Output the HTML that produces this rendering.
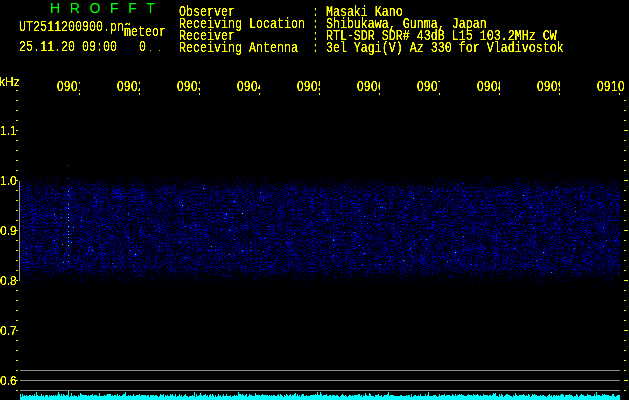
<!DOCTYPE html>
<html lang="en">
<head>
<meta charset="utf-8">
<title>HROFFT</title>
<style>
html,body{margin:0;padding:0;background:#000;}
body{width:629px;height:400px;overflow:hidden;position:relative;}
#w{position:absolute;left:0;top:0;width:629px;height:400px;background:#000;overflow:hidden;}
#tx{position:absolute;left:0;top:0;width:629px;height:400px;filter:url(#thr);}
.m{position:absolute;margin:0;font-family:"Liberation Mono",monospace;font-size:11.667px;line-height:14px;height:14px;color:#ff0;white-space:pre;transform-origin:0 0;transform:scaleY(1.3);}
.d{position:absolute;margin:0;font-family:"Liberation Sans",sans-serif;font-size:11.5px;letter-spacing:0.606px;font-kerning:none;font-variant-ligatures:none;line-height:14px;height:14px;color:#ff0;white-space:pre;transform-origin:0 0;transform:scaleY(1.22);}
.t{position:absolute;font-family:"Liberation Sans",sans-serif;font-size:14px;line-height:16px;color:#0f0;white-space:pre;}
.a{position:absolute;font-family:"Liberation Sans",sans-serif;font-size:12px;line-height:14px;color:#ff0;white-space:pre;}
.tl{position:absolute;top:78px;width:24px;height:18px;overflow:hidden;}
.tl .d{left:1px;top:0;}
.c{position:absolute;overflow:hidden;}
#gfx{position:absolute;left:0;top:0;}
</style>
</head>
<body>
<div id="w">
<svg width="0" height="0" style="position:absolute"><defs>
<filter id="thr" x="0" y="0" width="100%" height="100%" color-interpolation-filters="sRGB"><feComponentTransfer><feFuncA type="linear" slope="3" intercept="-0.6"/></feComponentTransfer></filter>
<filter id="thr2" x="0" y="0" width="100%" height="100%" color-interpolation-filters="sRGB"><feComponentTransfer><feFuncA type="linear" slope="1.25" intercept="-0.1"/></feComponentTransfer></filter>
</defs></svg>
<svg id="gfx" width="629" height="400" viewBox="0 0 629 400" shape-rendering="crispEdges">
<defs>
<linearGradient id="env" x1="0" y1="0" x2="0" y2="1">
<stop offset="0.0000" stop-color="rgb(148,148,148)"/>
<stop offset="0.0580" stop-color="rgb(173,173,173)"/>
<stop offset="0.1304" stop-color="rgb(214,214,214)"/>
<stop offset="0.2174" stop-color="rgb(255,255,255)"/>
<stop offset="0.7826" stop-color="rgb(255,255,255)"/>
<stop offset="0.8841" stop-color="rgb(214,214,214)"/>
<stop offset="0.9565" stop-color="rgb(173,173,173)"/>
<stop offset="1.0000" stop-color="rgb(148,148,148)"/>
</linearGradient>
<filter id="nz" x="0" y="0" width="100%" height="100%" color-interpolation-filters="sRGB">
<feTurbulence type="fractalNoise" baseFrequency="1.61514 1.755" numOctaves="1" seed="7"/>
<feColorMatrix type="matrix" values="1 0 0 0 0  1 0 0 0 0  1 0 0 0 0  0 0 0 0 1" result="n"/>
<feTurbulence type="fractalNoise" baseFrequency="0.13 0.09" numOctaves="2" seed="3"/>
<feColorMatrix type="matrix" values="1 0 0 0 0  1 0 0 0 0  1 0 0 0 0  0 0 0 0 1" result="m"/>
<feComposite in="n" in2="SourceGraphic" operator="arithmetic" k1="0" k2="1" k3="1" k4="-1" result="v"/>
<feTurbulence type="fractalNoise" baseFrequency="0.37 0.003" numOctaves="1" seed="11"/>
<feColorMatrix type="matrix" values="1 0 0 0 0  1 0 0 0 0  1 0 0 0 0  0 0 0 0 1" result="c"/>
<feComposite in="v" in2="m" operator="arithmetic" k1="0" k2="1" k3="0.18" k4="-0.09" result="v2"/>
<feComposite in="v2" in2="c" operator="arithmetic" k1="0" k2="1" k3="0.07" k4="-0.035"/>
<feComponentTransfer result="s"><feFuncR type="linear" slope="0" intercept="0"/><feFuncG type="table" tableValues="0 0 0 0 0 0 0 0 0 0 0 0 0 0 0 0 0 0 0 0 0 0 0 0 0 0 0 0 0 0 0 0 0 0 0 0 0 0 0.167 0.333 0.5 0.667 0.833 1 1 1 1 1 1 1 1"/><feFuncB type="table" tableValues="0 0 0 0 0 0 0 0 0 0 0 0 0 0 0 0 0 0 0 0 0 0 0 0.053 0.105 0.158 0.21 0.263 0.315 0.367 0.42 0.52 0.62 0.72 0.813 0.907 1.0 1.0 1.0 1.0 1.0 1.0 1.0 1.0 1.0 1.0 1.0 1.0 1.0 1.0 1.0"/></feComponentTransfer>
<feGaussianBlur in="s" stdDeviation="0.65" result="b"/>
<feColorMatrix in="s" type="matrix" values="0 0 0 0 0  0 0.6 0 0 0  0 0 0.58 0 0  0 0 0 0 1" result="s2"/>
<feColorMatrix in="b" type="matrix" values="0 0 0 0 0  0 0.4 0 0 0  0 0 0.42 0 0  0 0 0 0 1" result="b2"/>
<feComposite in="s2" in2="b2" operator="arithmetic" k1="0" k2="1" k3="1" k4="0"/>
</filter>
</defs>
<rect x="20" y="160" width="300" height="138" fill="url(#env)" filter="url(#nz)"/>
<g transform="translate(0,-500)"><rect x="320" y="660" width="300" height="138" fill="url(#env)" filter="url(#nz)"/></g>
<rect x="68" y="191" width="1" height="1" fill="#0df"/><rect x="68" y="195" width="1" height="1" fill="#0bf"/><rect x="68" y="204" width="1" height="1" fill="#0ef"/><rect x="68" y="208" width="1" height="1" fill="#0ef"/><rect x="68" y="214" width="1" height="1" fill="#0cf"/><rect x="68" y="217" width="1" height="1" fill="#0ff"/><rect x="68" y="220" width="1" height="1" fill="#0df"/><rect x="68" y="226" width="1" height="1" fill="#0ef"/><rect x="68" y="231" width="1" height="1" fill="#0cf"/><rect x="68" y="234" width="1" height="1" fill="#0df"/><rect x="68" y="237" width="1" height="1" fill="#0ef"/><rect x="68" y="241" width="1" height="1" fill="#0bf"/><rect x="68" y="245" width="1" height="1" fill="#0df"/><rect x="68" y="255" width="1" height="1" fill="#0af"/><rect x="68" y="261" width="1" height="1" fill="#0bf"/><rect x="68" y="165" width="1" height="1" fill="#04f"/><rect x="68" y="178" width="1" height="1" fill="#04f"/><rect x="54" y="214" width="1" height="1" fill="#0bf"/><rect x="61" y="217" width="1" height="1" fill="#0af"/><rect x="73" y="227" width="1" height="1" fill="#0af"/><rect x="54" y="240" width="1" height="1" fill="#0af"/><rect x="62" y="244" width="1" height="1" fill="#0cf"/><rect x="71" y="242" width="1" height="1" fill="#0af"/><rect x="92" y="250" width="1" height="1" fill="#0bf"/>
<path d="M19.5 181V281" stroke="#999" stroke-width="1" fill="none"/>
<path d="M20 370.5H620M20 380.5H620M20 390.5H620" stroke="#8a8a8a" stroke-width="1" fill="none"/>
<path d="M16 90h2v1h-2zM16 100h2v1h-2zM16 110h2v1h-2zM16 120h2v1h-2zM16 130h2v1h-2zM16 140h2v1h-2zM16 150h2v1h-2zM16 160h2v1h-2zM16 170h2v1h-2zM16 180h2v1h-2zM16 190h2v1h-2zM16 200h2v1h-2zM16 210h2v1h-2zM16 220h2v1h-2zM16 230h2v1h-2zM16 240h2v1h-2zM16 250h2v1h-2zM16 260h2v1h-2zM16 270h2v1h-2zM16 280h2v1h-2zM16 290h2v1h-2zM16 300h2v1h-2zM16 310h2v1h-2zM16 320h2v1h-2zM16 330h2v1h-2zM16 340h2v1h-2zM16 350h2v1h-2zM16 360h2v1h-2zM16 370h2v1h-2zM16 380h2v1h-2zM16 390h2v1h-2zM624 100h2v1h-2zM624 110h2v1h-2zM624 120h2v1h-2zM624 130h4v1h-4zM624 140h2v1h-2zM624 150h2v1h-2zM624 160h2v1h-2zM624 170h2v1h-2zM624 180h4v1h-4zM624 190h2v1h-2zM624 200h2v1h-2zM624 210h2v1h-2zM624 220h2v1h-2zM624 230h4v1h-4zM624 240h2v1h-2zM624 250h2v1h-2zM624 260h2v1h-2zM624 270h2v1h-2zM624 280h4v1h-4zM624 290h2v1h-2zM624 300h2v1h-2zM624 310h2v1h-2zM624 320h2v1h-2zM624 330h4v1h-4zM624 340h2v1h-2zM624 350h2v1h-2zM624 360h2v1h-2zM624 370h2v1h-2zM624 380h4v1h-4zM624 390h2v1h-2zM79 93h1v2h-1zM139 93h1v2h-1zM199 93h1v2h-1zM259 93h1v2h-1zM319 93h1v2h-1zM379 93h1v2h-1zM439 93h1v2h-1zM499 93h1v2h-1zM559 93h1v2h-1zM619 93h1v2h-1z" fill="#ff0"/>
<path d="M150 50h1v1h-1zM159 50h1v1h-1z" fill="#cc0"/>
<path d="M20 400V394h1V397h1V394h1V396h1V395h1V396h1V395h1V396h2V395h2V396h1V395h1V396h1V394h1V396h1V392h1V395h1V396h3V394h1V396h1V395h1V397h1V395h3V397h1V395h1V396h1V395h1V396h1V395h1V396h1V395h1V396h1V395h1V392h1V394h1V396h1V394h1V396h1V394h1V395h1V396h1V395h2V391h1V397h1V396h1V393h1V396h2V395h1V396h2V397h1V395h1V396h1V393h1V394h1V395h5V396h1V395h1V396h1V395h2V394h1V396h1V395h3V396h2V393h1V396h4V395h1V396h1V395h1V394h4V396h1V395h1V396h1V395h2V396h1V394h1V396h1V395h1V396h2V395h1V394h2V392h1V396h2V395h1V396h1V395h1V396h2V394h1V396h2V395h3V394h1V396h1V395h5V396h1V395h2V397h1V395h4V396h1V395h2V396h1V397h1V396h1V394h1V395h2V394h1V397h1V395h1V396h1V395h1V396h2V394h1V395h1V394h1V396h2V394h1V397h1V396h2V394h1V396h1V395h1V397h1V396h1V395h1V394h1V396h2V397h1V396h3V395h1V396h1V392h1V397h1V394h1V396h2V395h1V393h1V395h1V396h1V395h2V394h1V396h1V395h1V397h1V395h1V394h1V396h1V394h1V395h1V397h1V395h1V397h1V396h1V394h1V396h1V395h1V397h1V396h1V394h1V396h2V394h1V396h3V395h1V397h1V396h2V395h1V396h1V395h1V396h1V392h1V394h2V395h1V394h1V395h1V396h1V395h1V394h1V397h1V396h1V394h1V395h2V396h3V393h1V395h4V396h1V395h1V394h1V395h5V396h1V395h1V396h1V395h1V396h1V395h2V396h2V395h1V394h1V396h1V394h1V395h1V396h1V397h1V395h1V396h1V394h1V395h1V396h1V395h1V394h1V396h1V395h2V394h1V393h1V396h1V394h1V396h1V395h1V397h1V395h1V394h2V396h2V395h1V396h3V395h5V394h1V395h1V392h1V395h2V392h1V394h1V396h1V395h3V394h1V396h2V395h2V396h1V395h3V396h1V395h2V396h1V397h1V396h1V395h1V394h1V395h1V396h1V395h1V396h1V397h1V396h1V395h2V396h1V395h1V396h1V395h4V394h2V396h1V395h1V397h1V395h1V396h1V393h1V395h1V396h2V393h1V394h1V396h3V397h1V395h3V394h1V396h2V395h1V397h1V396h1V395h3V394h1V392h1V396h1V395h4V396h6V395h2V396h4V395h1V396h1V395h2V397h1V394h1V397h1V396h1V395h2V396h2V395h1V396h1V394h1V396h4V394h1V396h1V395h1V392h1V396h4V395h3V396h1V397h1V396h1V394h1V396h1V395h3V394h1V396h1V395h4V396h2V394h1V395h1V396h1V394h1V396h1V395h2V394h1V395h1V394h1V395h2V396h3V395h1V394h1V395h3V396h1V394h1V395h3V394h1V395h1V396h1V395h1V396h2V394h1V395h4V396h1V395h2V396h1V395h1V393h1V394h1V393h1V396h2V397h1V394h1V396h1V394h1V395h1V397h1V396h1V395h1V394h2V395h2V396h2V397h1V395h1V396h1V393h1V395h1V396h2V395h4V394h1V395h1V396h1V395h1V396h1V394h1V395h1V397h1V396h1V394h1V395h1V394h1V395h2V396h3V395h1V396h1V395h2V396h2V397h1V396h1V395h1V394h1V396h1V395h1V397h1V395h2V396h1V395h1V396h1V395h1V396h1V395h1V394h2V395h1V397h1V395h4V394h1V395h2V396h1V397h1V396h2V394h1V395h1V397h1V396h1V395h1V394h1V395h2V396h3V394h1V395h3V396h3V394h1V396h1V392h1V395h3V396h2V394h1V395h1V394h1V395h4V396h3V394h2V396h1V397h1V396h1V395h3V400z" fill="#0ff"/>
</svg>

<div id="tt" style="position:absolute;left:0;top:0;width:200px;height:20px;filter:url(#thr2)">
<span class="t" style="left:50px;top:0px;word-spacing:5.75px">H R O F F T</span>
</div>
<div id="tx">

<div class="c" style="left:19px;top:18px;width:112px;height:20px;clip-path:polygon(0 0,112px 0,112px 7px,105px 7px,105px 20px,0 20px)"><div class="m" style="left:0;top:0">UT2511200900.png</div></div>
<div class="m" style="left:124px;top:23px">meteor</div>
<div class="m" style="left:19px;top:38px">25.11.20 09:00</div>
<div class="m" style="left:139px;top:38px">0</div>

<div class="m" style="left:179px;top:3px">Observer           : Masaki Kano</div>
<div class="m" style="left:179px;top:15px">Receiving Location : Shibukawa, Gunma, Japan</div>
<div class="m" style="left:179px;top:27px">Receiver           : RTL-SDR SDR# 43dB L15 103.2MHz CW</div>
<div class="m" style="left:179px;top:39px">Receiving Antenna  : 3el Yagi(V) Az 330 for Vladivostok</div>

<span class="a" style="left:-1px;top:75px">kHz</span>
<div class="tl" style="left:56px;width:24px"><div class="d">0901</div></div>
<div class="tl" style="left:116px;width:24px"><div class="d">0902</div></div>
<div class="tl" style="left:176px;width:24px"><div class="d">0903</div></div>
<div class="tl" style="left:236px;width:24px"><div class="d">0904</div></div>
<div class="tl" style="left:296px;width:24px"><div class="d">0905</div></div>
<div class="tl" style="left:356px;width:24px"><div class="d">0906</div></div>
<div class="tl" style="left:416px;width:24px"><div class="d">0907</div></div>
<div class="tl" style="left:476px;width:24px"><div class="d">0908</div></div>
<div class="tl" style="left:536px;width:24px"><div class="d">0909</div></div>
<div class="tl" style="left:596px;width:30px"><div class="d">0910</div></div>
<span class="a" style="left:0px;top:124px">1.1</span>
<span class="a" style="left:0px;top:174px">1.0</span>
<span class="a" style="left:0px;top:224px">0.9</span>
<span class="a" style="left:0px;top:274px">0.8</span>
<span class="a" style="left:0px;top:324px">0.7</span>
<span class="a" style="left:0px;top:374px">0.6</span>
</div>
</div>
</body>
</html>
